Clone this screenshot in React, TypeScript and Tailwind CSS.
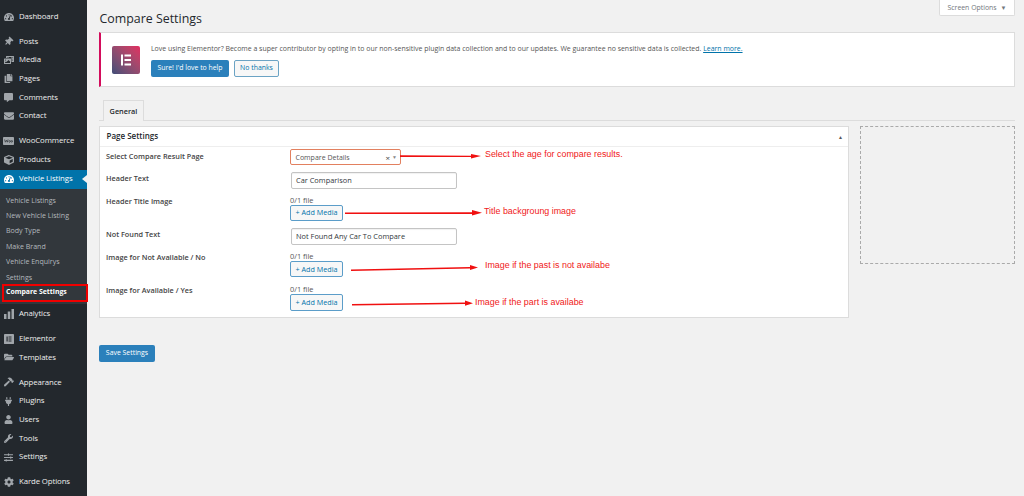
import React from "react";
import {
  FaTachometerAlt, FaThumbtack, FaCopy, FaCommentAlt, FaEnvelope, FaCube, FaFolderOpen,
  FaHammer, FaPlug, FaUser, FaWrench, FaSlidersH, FaCog, FaPhotoVideo,
} from "react-icons/fa";

const Bars = () => (
  <svg viewBox="0 0 12 12" className="w-[10px] h-[10px]" fill="currentColor">
    <rect x="0" y="6" width="3" height="6" /><rect x="4.5" y="3" width="3" height="9" /><rect x="9" y="0" width="3" height="12" />
  </svg>
);
const Elem = () => (
  <svg viewBox="0 0 12 12" className="w-[10px] h-[10px]">
    <rect width="12" height="12" rx="1" fill="currentColor" />
    <rect x="3" y="3" width="1.4" height="6" fill="#23282d" />
    <rect x="5.4" y="3" width="3.6" height="1.2" fill="#23282d" /><rect x="5.4" y="5.4" width="3.6" height="1.2" fill="#23282d" /><rect x="5.4" y="7.8" width="3.6" height="1.2" fill="#23282d" />
  </svg>
);
const Woo = () => (
  <svg viewBox="0 0 14 12" className="w-[11px] h-[10px]">
    <rect width="14" height="10" y="1" rx="1" fill="currentColor" />
    <path d="M2 4l1 3.5L4.3 5l1.2 2.5L6.5 4M8.5 5.5a1 1 0 1 0 .01 0M11.2 5.5a1 1 0 1 0 .01 0" stroke="#23282d" strokeWidth=".8" fill="none" />
  </svg>
);

type It = { label: string; icon: React.ReactNode; gap?: boolean };
const top: It[] = [
  { label: "Dashboard", icon: <FaTachometerAlt size={10} /> },
  { label: "Posts", icon: <FaThumbtack size={9} className="rotate-45" />, gap: true },
  { label: "Media", icon: <FaPhotoVideo size={10} /> },
  { label: "Pages", icon: <FaCopy size={9} /> },
  { label: "Comments", icon: <FaCommentAlt size={9} /> },
  { label: "Contact", icon: <FaEnvelope size={10} /> },
  { label: "WooCommerce", icon: <Woo />, gap: true },
  { label: "Products", icon: <FaCube size={10} /> },
];
const bottom: It[] = [
  { label: "Analytics", icon: <Bars /> },
  { label: "Elementor", icon: <Elem />, gap: true },
  { label: "Templates", icon: <FaFolderOpen size={10} /> },
  { label: "Appearance", icon: <FaHammer size={10} />, gap: true },
  { label: "Plugins", icon: <FaPlug size={9} /> },
  { label: "Users", icon: <FaUser size={9} /> },
  { label: "Tools", icon: <FaWrench size={9} /> },
  { label: "Settings", icon: <FaSlidersH size={9} /> },
  { label: "Karde Options", icon: <FaCog size={10} />, gap: true },
];
const subs = ["Vehicle Listings", "New Vehicle Listing", "Body Type", "Make Brand", "Vehicle Enquirys", "Settings"];

const MenuItem = ({ it }: { it: It }) => (
  <div className={`flex items-center h-[18.7px] pl-[3px] text-[7.8px] tracking-[-0.1px] text-[#eeeeee] ${it.gap ? "mt-[6.3px]" : ""}`}>
    <span className="w-[11px] flex justify-center text-[#a0a5aa]">{it.icon}</span>
    <span className="ml-[5px]">{it.label}</span>
  </div>
);

const AddMedia = () => (
  <div className="w-[53px] h-[16.7px] border border-[#5b9dc9] rounded-[2px] bg-[#f7f7f7] text-[#0073aa] text-[7.2px] flex items-center justify-center">+ Add Media</div>
);
const FileRow = ({ label, top = "mt-[6px]" }: { label: string; top?: string }) => (
  <div className={`flex ${top}`}>
    <div className="w-[184px] leading-[12.5px] text-[7.3px] font-semibold text-[#444]">{label}</div>
    <div>
      <div className="h-[10px] leading-[11px] text-[7.4px] text-[#555]">0/1 file</div>
      <AddMedia />
    </div>
  </div>
);
const TextRow = ({ label, value }: { label: string; value: string }) => (
  <div className="flex mt-[6.5px] items-start">
    <div className="w-[184px] leading-[13px] text-[7.3px] font-semibold text-[#444]">{label}</div>
    <div className="w-[166px] h-[17px] ml-[1px] border border-[#c4c4c4] rounded-[2px] bg-white text-[7.4px] text-[#32373c] flex items-center pl-[4px] pt-[0.5px] shadow-[inset_0_1px_1px_rgba(0,0,0,0.06)]">{value}</div>
  </div>
);

const notes = [
  { t: "Select the age for compare results.", x: 485, y: 148 },
  { t: "Title backgroung image", x: 484, y: 205 },
  { t: "Image if the past is not availabe", x: 485, y: 259 },
  { t: "Image if the part is availabe", x: 475, y: 296 },
];

export default function App() {
  return (
    <div className="relative flex w-[1024px] h-[496px] overflow-hidden bg-[#f1f1f1]" style={{ fontFamily: '"Open Sans", "Noto Sans", sans-serif' }}>
      <aside className="w-[87px] shrink-0 bg-[#23282d] pt-[7.2px]">
        {top.map((it) => <MenuItem key={it.label} it={it} />)}
        <div className="relative flex items-center h-[19px] pl-[3px] mt-[0.4px] bg-[#0073aa] text-white text-[7.8px] tracking-[-0.1px]">
          <span className="w-[11px] flex justify-center"><FaTachometerAlt size={10} /></span>
          <span className="ml-[5px]">Vehicle Listings</span>
          <span className="absolute right-0 top-[5px] w-0 h-0 border-y-[4.5px] border-y-transparent border-r-[5px] border-r-[#f1f1f1]" />
        </div>
        <div className="bg-[#32373c] pt-[3.5px] pb-[4px] mb-[0.5px]">
          {subs.map((s) => (
            <div key={s} className="h-[15.4px] pl-[6px] flex items-center text-[7.05px] text-[#b4b9be]">{s}</div>
          ))}
          <div className="h-[15.4px] pl-[6px] flex items-center text-[6.9px] font-bold text-white">Compare Settings</div>
        </div>
        {bottom.map((it) => <MenuItem key={it.label} it={it} />)}
      </aside>

      <main className="flex-1 pl-[12px] pr-[9px] min-w-0">
        <div className="flex justify-between items-start h-[32px]">
          <h1 className="mt-[10px] ml-[0.5px] text-[12.4px] leading-[18px] text-[#23282d]">Compare Settings</h1>
          <div className="w-[76px] h-[16px] pt-[1.5px] bg-white border border-t-0 border-[#dcdcdc] rounded-b-[2px] text-[6.9px] text-[#72777c] flex items-center justify-center gap-[4px]">
            Screen Options <span className="text-[6px]">▼</span>
          </div>
        </div>

        <div className="h-[55px] bg-white border border-[#dcdcdc] border-l-[2px] border-l-[#d30c5c] flex pl-[11px] pt-[13px]">
          <div className="w-[28px] h-[28px] rounded-[2px] bg-gradient-to-tr from-[#3f4c78] to-[#e22a60] flex items-center justify-center shrink-0">
            <svg viewBox="0 0 12 12" className="w-[12px] h-[12px]" fill="#fff">
              <rect x="1" y="0.5" width="2" height="11" /><rect x="4.5" y="0.5" width="6.5" height="2" /><rect x="4.5" y="5" width="6.5" height="2" /><rect x="4.5" y="9.5" width="6.5" height="2" />
            </svg>
          </div>
          <div className="ml-[11px]">
            <p className="mt-[-3px] h-[12px] leading-[12px] text-[6.95px] text-[#555] whitespace-nowrap">
              Love using Elementor? Become a super contributor by opting in to our non-sensitive plugin data collection and to our updates. We guarantee no sensitive data is collected. <span className="text-[#0073aa] underline">Learn more.</span>
            </p>
            <div className="flex gap-[5px] mt-[4.5px]">
              <div className="w-[78px] h-[17px] rounded-[2px] bg-[#2b80bb] text-white text-[6.9px] flex items-center justify-center">Sure! I'd love to help</div>
              <div className="w-[45px] h-[17px] rounded-[2px] border border-[#6ba3c4] bg-[#f7f7f7] text-[#0073aa] text-[6.9px] flex items-center justify-center">No thanks</div>
            </div>
          </div>
        </div>

        <div className="h-[34px] pt-[13px] pl-[4px] border-b border-[#dcdcdc] flex">
          <div className="w-[41px] h-[21px] border border-b-0 border-[#dcdcdc] bg-[#f1f1f1] text-[7.3px] font-semibold text-[#23282d] flex items-center justify-center">General</div>
        </div>

        <div className="flex gap-[11px] mt-[5px]">
          <section className="w-[750px] h-[192px] shrink-0 bg-white border border-[#dcdcdc] px-[6px]">
            <div className="relative -mx-[6px] px-[6.5px] pb-[1px] h-[20px] flex items-center border-b border-[#eeeeee] text-[8px] font-semibold text-[#23282d]">
              Page Settings
              <span className="absolute right-[5px] top-[7px] text-[5px] text-[#555]">▲</span>
            </div>
            <div className="flex mt-[2px] items-start">
              <div className="w-[184px] leading-[14px] text-[7.3px] font-semibold text-[#444]">Select Compare Result Page</div>
              <div className="relative w-[111px] h-[16px] pt-[1.5px] border border-[#e2805f] rounded-[2px] bg-white text-[7px] text-[#555] flex items-center pl-[4.5px]">
                Compare Details
                <span className="absolute right-[10px] top-[2px] text-[8px] text-[#444]">×</span>
                <span className="absolute right-[3px] top-[4px] text-[5px] text-[#888]">▼</span>
              </div>
            </div>
            <TextRow label="Header Text" value="Car Comparison" />
            <FileRow label="Header Title Image" />
            <TextRow label="Not Found Text" value="Not Found Any Car To Compare" />
            <FileRow label="Image for Not Available / No" />
            <FileRow label="Image for Available / Yes" top="mt-[6.7px]" />
          </section>
          <div className="w-[155px] h-[138px] border-[1.5px] border-dashed border-[#aaaaaa]" />
        </div>

        <div className="w-[56px] h-[17px] mt-[27px] rounded-[2px] bg-[#2b80bb] text-white text-[6.9px] flex items-center justify-center">Save Settings</div>
      </main>

      <div className="absolute left-[2px] top-[284px] w-[86px] h-[17.5px] border-2 border-[#f00000]" />

      <svg className="absolute inset-0 pointer-events-none" width="1024" height="496" fill="#f01010">
        <path d="M400 155.2L471 155.8V154L481 156L471 158.6V157L400 157Z" />
        <path d="M345 212.5L472 212.2V210L482 212.8L472 215.6V214L345 214Z" />
        <path d="M351 269.5L470 267V265L478 267.4L470 270V268.4L351 271Z" />
        <path d="M352 304L465 302.4V300.6L473 303.2L465 305.8V304L352 305.6Z" />
      </svg>
      {notes.map((n) => (
        <div key={n.t} className="absolute h-[12px] leading-[12px] text-[8.9px] text-[#f02020] whitespace-nowrap" style={{ left: n.x, top: n.y, fontFamily: '"Liberation Sans", sans-serif' }}>{n.t}</div>
      ))}
    </div>
  );
}
